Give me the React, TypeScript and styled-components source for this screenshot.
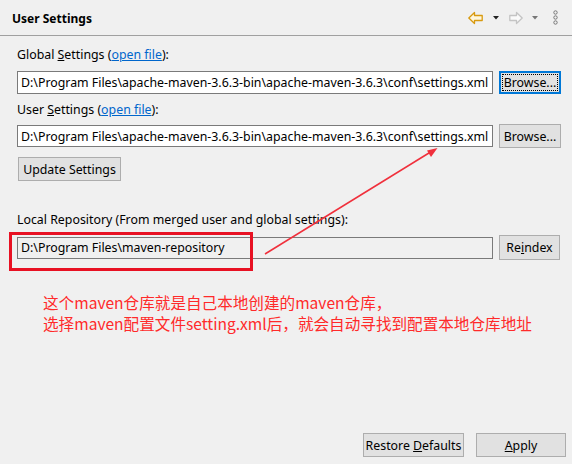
import React from "react";
import styled, { createGlobalStyle } from "styled-components";

const Global = createGlobalStyle`
  html, body { margin: 0; padding: 0; background: #f0f0f0; }
  body { font-family: "Noto Sans", "Noto Sans CJK SC", sans-serif; font-size: 12.35px; color: #000; }
`;

const Page = styled.div`
  position: relative;
  width: 572px;
  height: 464px;
  background: #f0f0f0;
  display: flex;
  flex-direction: column;
  overflow: hidden;
`;

const Header = styled.div`
  height: 35px;
  border-bottom: 1px solid #a0a0a0;
  display: flex;
  align-items: center;
  padding: 0 14px 0 12px;
  box-sizing: content-box;
`;

const Title = styled.div`
  font-weight: 700;
  font-size: 12px;
  flex: 1;
  padding-top: 2px;
`;

const Tools = styled.div`
  display: flex;
  align-items: center;
`;

const Content = styled.div`
  display: flex;
  flex-direction: column;
  padding: 0 11px 0 17px;
  flex: 1;
`;

const Label = styled.div<{ $mt: number }>`
  margin-top: ${(p) => p.$mt}px;
  height: 16px;
  line-height: 16px;
  white-space: nowrap;
`;

const Link = styled.span`
  color: #0066cc;
  text-decoration: underline;
`;

const U = styled.span`
  text-decoration: underline;
`;

const Row = styled.div<{ $mt: number; $h: number }>`
  margin-top: ${(p) => p.$mt}px;
  height: ${(p) => p.$h}px;
  display: flex;
  align-items: center;
  gap: 6px;
`;

const Input = styled.div<{ $disabled?: boolean; $h: number }>`
  width: 476px;
  height: ${(p) => p.$h}px;
  box-sizing: border-box;
  border: 1px solid #7a7a7a;
  background: ${(p) => (p.$disabled ? "#f0f0f0" : "#fff")};
  padding-left: 3px;
  display: flex;
  align-items: center;
  white-space: nowrap;
  overflow: hidden;
`;

const Button = styled.div<{ $w: number; $h: number; $focus?: boolean; $ml?: number }>`
  width: ${(p) => p.$w}px;
  height: ${(p) => p.$h}px;
  margin-left: ${(p) => p.$ml ?? 0}px;
  box-sizing: border-box;
  border: ${(p) => (p.$focus ? "2px solid #0078d7" : "1px solid #adadad")};
  background: #e1e1e1;
  display: flex;
  align-items: center;
  justify-content: center;
  white-space: nowrap;
  position: relative;
`;

const FocusRing = styled.span`
  position: absolute;
  inset: 1px;
  border: 1px dotted #000;
`;

const Note = styled.div`
  margin-top: 32px;
  margin-left: 26px;
  color: #ff2a2a;
  font-family: "Noto Sans CJK SC", "Noto Sans", sans-serif;
  font-size: 15.6px;
  line-height: 21px;
  white-space: nowrap;
`;

const Footer = styled.div`
  display: flex;
  justify-content: flex-end;
  gap: 12px;
  padding: 0 6px 7px 0;
`;

const Overlay = styled.svg`
  position: absolute;
  left: 0;
  top: 0;
  pointer-events: none;
`;

const Highlight = styled.div`
  position: absolute;
  left: 9px;
  top: 232px;
  width: 244px;
  height: 39px;
  box-sizing: border-box;
  border: 3px solid #e81123;
`;

const BackIcon = () => (
  <svg width="15" height="14" viewBox="0 0 15 14">
    <path d="M0.8 7 L6.5 1.5 V4.5 H14.2 V9.5 H6.5 V12.5 Z" fill="#fff7dc" stroke="#d89a10" strokeWidth="1.3" strokeLinejoin="round" />
  </svg>
);

const FwdIcon = () => (
  <svg width="14" height="14" viewBox="0 0 14 14">
    <path d="M13.2 7 L7.5 1.5 V4.5 H0.8 V9.5 H7.5 V12.5 Z" fill="#fafafa" stroke="#c4c4c4" strokeWidth="1.3" strokeLinejoin="round" />
  </svg>
);

const Tri = ({ c, ml, mr }: { c: string; ml: number; mr: number }) => (
  <svg width="6" height="4" viewBox="0 0 6 4" style={{ marginLeft: ml, marginRight: mr }}>
    <path d="M0 0 H6 L3 3.5 Z" fill={c} />
  </svg>
);

const Dots = () => (
  <svg width="5" height="15" viewBox="0 0 5 15" style={{ marginLeft: 15 }}>
    <circle cx="2.5" cy="2.5" r="1.7" fill="none" stroke="#777" strokeWidth="1" />
    <circle cx="2.5" cy="7.5" r="1.7" fill="none" stroke="#777" strokeWidth="1" />
    <circle cx="2.5" cy="12.5" r="1.7" fill="none" stroke="#777" strokeWidth="1" />
  </svg>
);

const PATH = "D:\\Program Files\\apache-maven-3.6.3-bin\\apache-maven-3.6.3\\conf\\settings.xml";

export default function App() {
  return (
    <Page>
      <Global />
      <Header>
        <Title>User Settings</Title>
        <Tools>
          <BackIcon />
          <Tri c="#222" ml={10} mr={10} />
          <FwdIcon />
          <Tri c="#777" ml={9} mr={0} />
          <Dots />
        </Tools>
      </Header>
      <Content>
        <Label $mt={11}>
          Global <U>S</U>ettings (<Link>open file</Link>):
        </Label>
        <Row $mt={8} $h={23}>
          <Input $h={23}>{PATH}</Input>
          <Button $w={62} $h={23} $focus>
            <FocusRing />
            <span>Browse...</span>
          </Button>
        </Row>
        <Label $mt={8}>
          User <U>S</U>ettings (<Link>open file</Link>):
        </Label>
        <Row $mt={6} $h={24}>
          <Input $h={22}>{PATH}</Input>
          <Button $w={62} $h={24}>
            <span>Browse...</span>
          </Button>
        </Row>
        <Row $mt={9} $h={24}>
          <Button $w={103} $h={24} $ml={1}>
            <span>Update Settings</span>
          </Button>
        </Row>
        <Label $mt={31}>Local Repository (From merged user and global settings):</Label>
        <Row $mt={7} $h={25}>
          <Input $h={22} $disabled>D:\Program Files\maven-repository</Input>
          <Button $w={61} $h={25}>
            <span>
              Re<U>i</U>ndex
            </span>
          </Button>
        </Row>
        <Note>
          这个maven仓库就是自己本地创建的maven仓库，
          <br />
          选择maven配置文件setting.xml后，就会自动寻找到配置本地仓库地址
        </Note>
      </Content>
      <Footer>
        <Button $w={101} $h={24}>
          <span>
            Restore <U>D</U>efaults
          </span>
        </Button>
        <Button $w={90} $h={24}>
          <span>
            <U>A</U>pply
          </span>
        </Button>
      </Footer>
      <Highlight />
      <Overlay width="572" height="464" viewBox="0 0 572 464">
        <line x1="265" y1="254" x2="433" y2="150.5" stroke="#f0303c" strokeWidth="1.5" />
        <path d="M437.5 148 L427 150.5 L431 157 Z" fill="#f0303c" />
      </Overlay>
    </Page>
  );
}
